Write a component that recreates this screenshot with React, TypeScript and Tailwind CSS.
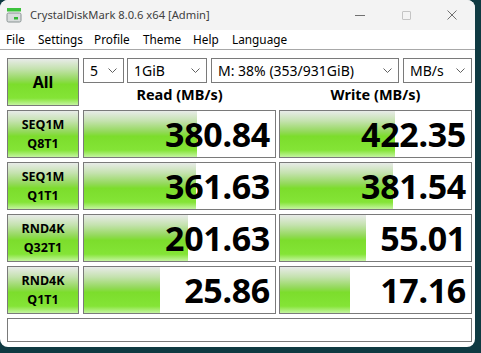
import React from "react";

const barBg =
  "bg-[linear-gradient(to_bottom,#e8ebe8_0%,#c4e2ae_22%,#93d95a_45%,#7cdd2c_55%,#84e436_85%,#c4f4a0_100%)]";

function Chevron() {
  return (
    <svg width="9" height="5" viewBox="0 0 9 5" className="shrink-0">
      <path d="M0.5 0.5 L4.5 4.5 L8.5 0.5" fill="none" stroke="#606060" strokeWidth="1" />
    </svg>
  );
}

function Select({ w, text }: { w: string; text: string }) {
  return (
    <div className={`${w} h-[25px] border border-[#7a7a7a] bg-white flex items-center justify-between pl-[6px] pr-[6px]`}>
      <span className="text-[14px] leading-none text-black">{text}</span>
      <Chevron />
    </div>
  );
}

function Label({ a, b }: { a: string; b: string }) {
  return (
    <div
      className={`w-[72px] h-[48px] border border-[#7a7a7a] ${barBg} flex flex-col items-center justify-center font-bold text-[12.5px] leading-[19px] text-black`}
    >
      <span>{a}</span>
      <span>{b}</span>
    </div>
  );
}

function Value({ v, bar }: { v: string; bar: number }) {
  return (
    <div className="w-[193px] h-[48px] border border-[#7a7a7a] bg-white relative flex items-center justify-end pr-[5px]">
      <div className={`absolute left-0 top-0 bottom-0 ${barBg}`} style={{ width: bar }} />
      <span className="relative font-bold text-[34px] leading-none text-black tracking-[-0.3px]">{v}</span>
    </div>
  );
}

const rows = [
  { a: "SEQ1M", b: "Q8T1", r: "380.84", rb: 113, w: "422.35", wb: 115 },
  { a: "SEQ1M", b: "Q1T1", r: "361.63", rb: 112, w: "381.54", wb: 113 },
  { a: "RND4K", b: "Q32T1", r: "201.63", rb: 104, w: "55.01", wb: 86 },
  { a: "RND4K", b: "Q1T1", r: "25.86", rb: 76, w: "17.16", wb: 70 },
];

export default function App() {
  return (
    <div
      className="w-[481px] h-[353px] bg-[#0f3a42] overflow-hidden"
      style={{ fontFamily: '"Noto Sans", "Open Sans", sans-serif' }}
    >
      <div className="w-[475px] h-[347px] bg-white rounded-[8px] overflow-hidden flex flex-col">
        {/* Title bar */}
        <div className="h-[30px] bg-[#f3f3f3] flex items-center shrink-0">
          <svg width="16" height="16" viewBox="0 0 16 16" className="ml-[6px] mr-[8px]">
            <rect x="1" y="1" width="14" height="3.5" fill="#3cc23c" />
            <rect x="1" y="6" width="14" height="9" rx="1.5" fill="#d8dcdc" stroke="#8a9494" strokeWidth="1" />
            <rect x="8" y="10" width="4" height="2.5" fill="#34b834" />
          </svg>
          <span className="text-[11.2px] text-[#404040] leading-none">CrystalDiskMark 8.0.6 x64 [Admin]</span>
          <div className="ml-auto flex items-center h-full">
            <div className="w-[46px] h-full flex items-center justify-center">
              <div className="w-[10px] h-px bg-[#707070]" />
            </div>
            <div className="w-[46px] h-full flex items-center justify-center">
              <div className="w-[9px] h-[9px] border border-[#c4c4c4] rounded-[1px]" />
            </div>
            <div className="w-[46px] h-full flex items-center justify-center">
              <svg width="10" height="10" viewBox="0 0 10 10">
                <path d="M0.5 0.5 L9.5 9.5 M9.5 0.5 L0.5 9.5" stroke="#707070" strokeWidth="1" />
              </svg>
            </div>
          </div>
        </div>
        {/* Menu bar */}
        <div className="h-[20px] border-b border-[#a8a8a8] flex items-center pl-[6px] text-[11.8px] text-black leading-none shrink-0">
          <span className="w-[32px]">File</span>
          <span className="w-[56px]">Settings</span>
          <span className="w-[49px]">Profile</span>
          <span className="w-[50px]">Theme</span>
          <span className="w-[39px]">Help</span>
          <span>Language</span>
        </div>
        {/* Content */}
        <div className="pl-[7px] pt-[8px] flex flex-col gap-[4px]">
          <div className="flex h-[48px]">
            <div className={`w-[72px] h-[48px] border border-[#7a7a7a] ${barBg} flex items-center justify-center font-bold text-[16px] text-black`}>
              All
            </div>
            <div className="ml-[4px] flex flex-col">
              <div className="flex">
                <Select w="w-[41px]" text="5" />
                <div className="w-[3px]" />
                <Select w="w-[80px]" text="1GiB" />
                <div className="w-[4px]" />
                <Select w="w-[188px]" text="M: 38% (353/931GiB)" />
                <div className="w-[4px]" />
                <Select w="w-[69px]" text="MB/s" />
              </div>
              <div className="flex flex-1">
                <div className="w-[193px] flex items-center justify-center font-bold text-[14.5px] text-black pt-[1px]">
                  Read (MB/s)
                </div>
                <div className="w-[3px]" />
                <div className="w-[193px] flex items-center justify-center font-bold text-[14.5px] text-black pt-[1px]">
                  Write (MB/s)
                </div>
              </div>
            </div>
          </div>
          {rows.map((r, i) => (
            <div key={i} className="flex">
              <Label a={r.a} b={r.b} />
              <div className="w-[4px]" />
              <Value v={r.r} bar={r.rb} />
              <div className="w-[3px]" />
              <Value v={r.w} bar={r.wb} />
            </div>
          ))}
          <div className="w-[465px] h-[24px] border border-[#7a7a7a] bg-white" />
        </div>
      </div>
    </div>
  );
}
